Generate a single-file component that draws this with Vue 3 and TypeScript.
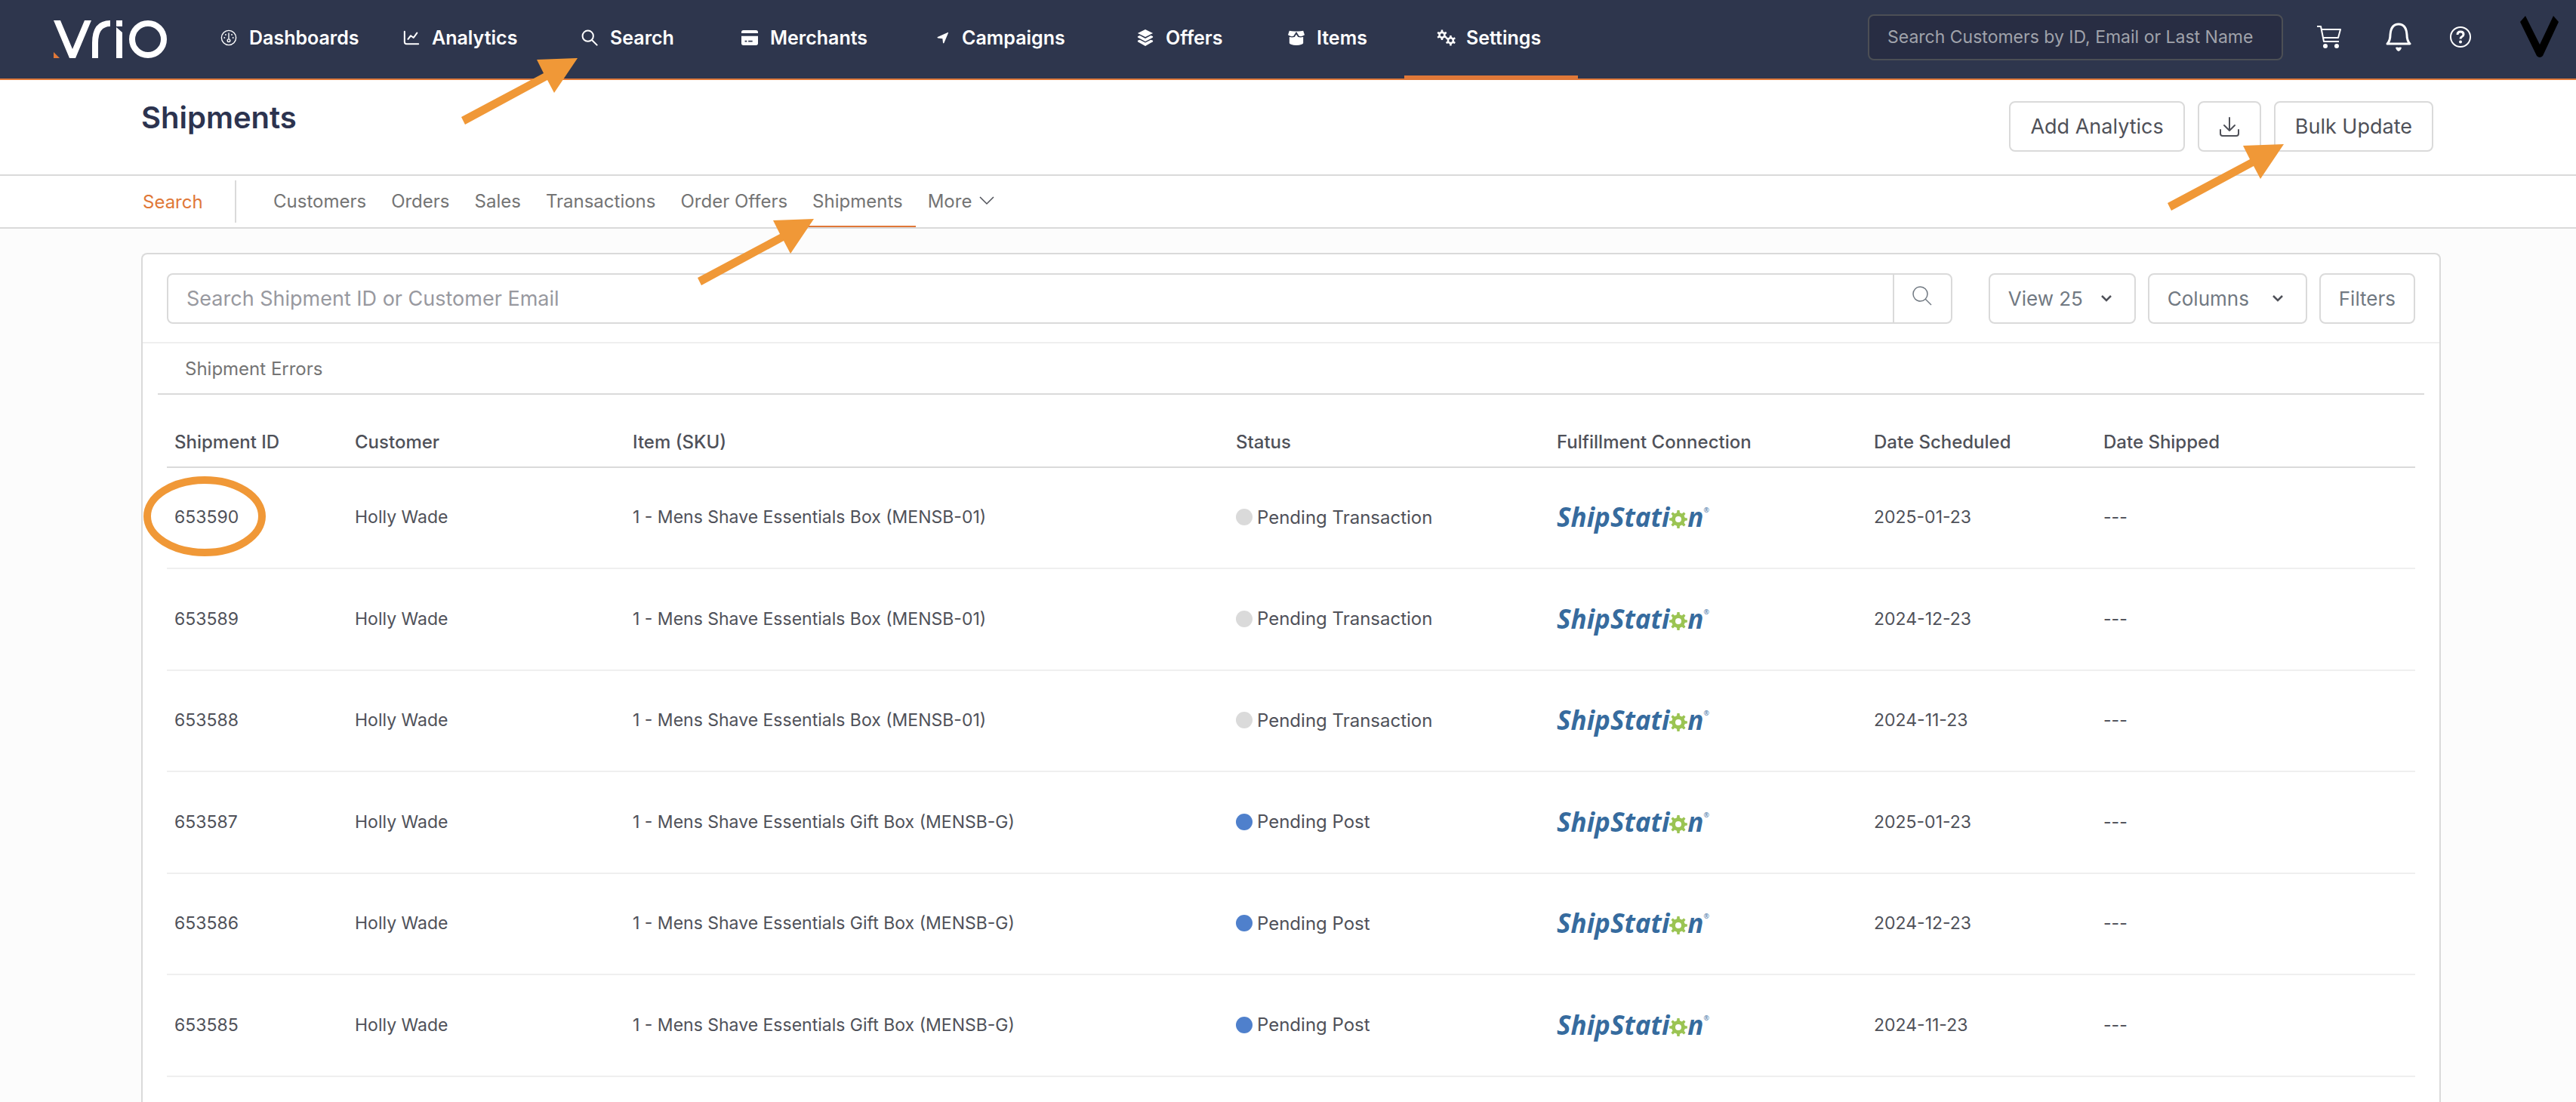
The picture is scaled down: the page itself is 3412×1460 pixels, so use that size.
<script setup lang="ts">
import { ref } from 'vue'

interface NavItem {
  label: string
  icon: string
  active?: boolean
  marked?: boolean
}

interface Tab {
  label: string
  active?: boolean
}

interface Shipment {
  id: string
  customer: string
  item: string
  status: 'Pending Transaction' | 'Pending Post'
  scheduled: string
  shipped: string
}

/** Outline of a cog wheel with a round hole in the middle (even-odd fill). */
function gear(cx: number, cy: number, teeth: number, outer: number, inner: number, hole: number): string {
  const step = (Math.PI * 2) / teeth
  const at = (r: number, a: number) => `${(cx + r * Math.sin(a)).toFixed(2)} ${(cy - r * Math.cos(a)).toFixed(2)}`
  const points: string[] = []
  for (let i = 0; i < teeth; i++) {
    const a = i * step
    points.push(at(inner, a - step * 0.28), at(outer, a - step * 0.17), at(outer, a + step * 0.17), at(inner, a + step * 0.28))
  }
  return `M${points.join('L')}Z M${cx - hole} ${cy}a${hole} ${hole} 0 1 0 ${hole * 2} 0a${hole} ${hole} 0 1 0 ${-hole * 2} 0Z`
}

const icons: Record<string, string> = {
  gauge:
    '<g fill="none" stroke="currentColor" stroke-width="1.5"><circle cx="12" cy="12" r="10.5"/><path d="M12 5v9"/><circle cx="12" cy="16" r="2"/></g><g fill="currentColor"><circle cx="7.6" cy="7.6" r="1"/><circle cx="16.4" cy="7.6" r="1"/><circle cx="5.8" cy="12" r="1"/><circle cx="18.2" cy="12" r="1"/></g>',
  chart:
    '<g fill="none" stroke="currentColor" stroke-width="2.2" stroke-linecap="round" stroke-linejoin="round"><path d="M2 3v15q0 3 3 3h17"/><path d="M7 14l4-5 4 3 5-7"/></g>',
  search:
    '<g fill="none" stroke="currentColor" stroke-width="2.2" stroke-linecap="round"><circle cx="9.5" cy="9.5" r="7.8"/><path d="M15.5 15.5l7 7"/></g>',
  creditcard:
    '<path fill="currentColor" fill-rule="evenodd" d="M3 1h18q3 0 3 3v1.500H0V4q0-3 3-3zM0 9.500h24V20q0 3-3 3H3q-3 0-3-3zM5 16v2h3v-2zM10 16v2h6v-2z"/>',
  arrow: '<path fill="currentColor" d="M20.500 2.500q1-.5.8 1L14 21q-1 2-2 0l-.8-7.500L3 12.500q-2-.8-.5-2z"/>',
  layers:
    '<path fill="currentColor" d="M12 0l11 5.500L12 11 1 5.500zM1 10l3-1.200 8 4.200 8-4.200 3 1.200v1.500L12 17.500 1 11.500zM1 16.200l3-1.200 8 4.200 8-4.200 3 1.200v1.500L12 24 1 17.700z"/>',
  box:
    '<path fill="currentColor" d="M2 2q5 1 10 .6Q17 3 22 2l2 6q-4 3-8 1.500L12 3.200 8 9.500Q4 11 0 8zM2 11q4 1 7.500 0L12 7 14.500 11q3.500 1 7.500 0v9q-1 2.500-10 3-9-.5-10-3z"/>',
  gears: `<path fill="currentColor" fill-rule="evenodd" d="${gear(6.5, 8, 6, 7.5, 5.2, 2.4)}${gear(19, 16, 6, 7.5, 5.2, 2.4)}"/>`,
}

const navItems: NavItem[] = [
  { label: 'Dashboards', icon: 'gauge' },
  { label: 'Analytics', icon: 'chart' },
  { label: 'Search', icon: 'search', marked: true },
  { label: 'Merchants', icon: 'creditcard' },
  { label: 'Campaigns', icon: 'arrow' },
  { label: 'Offers', icon: 'layers' },
  { label: 'Items', icon: 'box' },
  { label: 'Settings', icon: 'gears', active: true },
]

const tabs: Tab[] = [
  { label: 'Customers' },
  { label: 'Orders' },
  { label: 'Sales' },
  { label: 'Transactions' },
  { label: 'Order Offers' },
  { label: 'Shipments', active: true },
]

const columns = ['Shipment ID', 'Customer', 'Item (SKU)', 'Status', 'Fulfillment Connection', 'Date Scheduled', 'Date Shipped']

const box = '1 - Mens Shave Essentials Box (MENSB-01)'
const giftBox = '1 - Mens Shave Essentials Gift Box (MENSB-G)'

const shipments: Shipment[] = [
  { id: '653590', customer: 'Holly Wade', item: box, status: 'Pending Transaction', scheduled: '2025-01-23', shipped: '---' },
  { id: '653589', customer: 'Holly Wade', item: box, status: 'Pending Transaction', scheduled: '2024-12-23', shipped: '---' },
  { id: '653588', customer: 'Holly Wade', item: box, status: 'Pending Transaction', scheduled: '2024-11-23', shipped: '---' },
  { id: '653587', customer: 'Holly Wade', item: giftBox, status: 'Pending Post', scheduled: '2025-01-23', shipped: '---' },
  { id: '653586', customer: 'Holly Wade', item: giftBox, status: 'Pending Post', scheduled: '2024-12-23', shipped: '---' },
  { id: '653585', customer: 'Holly Wade', item: giftBox, status: 'Pending Post', scheduled: '2024-11-23', shipped: '---' },
]

const pointer = '154,0 100,2 109,20 0,78 5,88 114,29 123,46'
const cog = gear(12, 12, 8, 12, 9, 4)

const customerQuery = ref('')
const shipmentQuery = ref('')
const pageSize = ref('25')
</script>

<template>
  <div class="page">
    <header class="topbar">
      <a class="brand" href="#" aria-label="vrio">
        <svg width="150" height="50" viewBox="0 0 150 50" aria-hidden="true">
          <path fill="#fff" d="M0 0h9l16 38L41 0h9L29 50h-8zM83 0h8v8h-8zM83 9l8 7v34h-8z" />
          <path fill="none" stroke="#fff" stroke-width="8" d="M55 50V30Q55 4 75 4" />
          <circle cx="125" cy="25" r="21" fill="none" stroke="#fff" stroke-width="8" />
          <path fill="#e07838" d="M0 42l8 8H0z" />
        </svg>
      </a>
      <nav class="mainnav" aria-label="Main">
        <a v-for="item in navItems" :key="item.label" href="#" :class="{ active: item.active }">
          <svg class="navicon" :class="item.icon" viewBox="0 0 24 24" aria-hidden="true" v-html="icons[item.icon]"></svg>
          <span>{{ item.label }}</span>
          <svg v-if="item.marked" class="pointer at-search" viewBox="0 0 154 88" aria-hidden="true"><polygon :points="pointer" /></svg>
        </a>
      </nav>
      <div class="tools">
        <input v-model="customerQuery" type="text" class="global" aria-label="Search customers" placeholder="Search Customers by ID, Email or Last Name" />
        <button type="button" aria-label="Cart">
          <svg width="34" height="30" viewBox="0 0 34 30" fill="none" stroke="#fff" stroke-width="2" stroke-linejoin="round" aria-hidden="true">
            <path d="M1 1h5l4 20h20M7 5h25l-3 11H9" />
            <circle cx="12" cy="27" r="2" fill="#fff" /><circle cx="27" cy="27" r="2" fill="#fff" />
          </svg>
        </button>
        <button type="button" aria-label="Notifications">
          <svg width="34" height="38" viewBox="0 0 34 38" fill="none" stroke="#fff" stroke-width="3" stroke-linejoin="round" aria-hidden="true">
            <path d="M2 28q4-4 4-12Q7 2 17 2t11 14q0 8 4 12z" />
            <path d="M13 33q2-1 4 0 2-1 4 0-1 4-4 5-3-1-4-5z" fill="#fff" stroke="none" />
          </svg>
        </button>
        <button type="button" aria-label="Help">
          <svg width="30" height="30" viewBox="0 0 30 30" fill="none" stroke="#fff" stroke-width="2" aria-hidden="true">
            <circle cx="15" cy="15" r="13" />
            <path d="M11 12q0-4 4-4t4 3.500q0 2-2 3t-2 3" stroke-width="3" />
            <circle cx="15" cy="21.500" r="1" />
          </svg>
        </button>
        <button type="button" aria-label="Account">
          <svg width="51" height="56" viewBox="0 0 51 56" aria-hidden="true"><path d="M0 8l7-8 19 38L44 0l7 8-21 45q-4 4-8 0z" /></svg>
        </button>
      </div>
    </header>

    <section class="heading">
      <h1>Shipments</h1>
      <div class="actions">
        <button type="button" class="btn">Add Analytics</button>
        <button type="button" class="btn download" aria-label="Download">
          <svg width="28" height="28" viewBox="0 0 28 28" fill="none" stroke="#4f5159" stroke-width="2" stroke-linecap="round" stroke-linejoin="round" aria-hidden="true">
            <path d="M14 2v17M7 12l7 7 7-7" /><path d="M2 18v5q0 3 3 3h18q3 0 3-3v-5" />
          </svg>
        </button>
        <button type="button" class="btn">
          Bulk Update
          <svg class="pointer at-bulk" viewBox="0 0 154 88" aria-hidden="true"><polygon :points="pointer" /></svg>
        </button>
      </div>
    </section>

    <nav class="subnav" aria-label="Search sections">
      <a class="section" href="#">Search</a>
      <a v-for="tab in tabs" :key="tab.label" class="tab" :class="{ active: tab.active }" href="#">
        {{ tab.label }}
        <svg v-if="tab.active" class="pointer at-tab" viewBox="0 0 154 88" aria-hidden="true"><polygon :points="pointer" /></svg>
      </a>
      <button type="button" class="tab more" aria-haspopup="menu">
        More
        <svg width="20" height="12" viewBox="0 0 20 12" fill="none" stroke="#4f5159" stroke-width="1.500" aria-hidden="true"><path d="M1 1l9 9 9-9" /></svg>
      </button>
    </nav>

    <main class="panel">
      <div class="toolbar">
        <form class="finder" role="search" @submit.prevent>
          <input v-model="shipmentQuery" type="text" aria-label="Search shipments" placeholder="Search Shipment ID or Customer Email" />
          <button type="submit" aria-label="Search">
            <svg width="26" height="26" viewBox="0 0 26 26" fill="none" stroke="#717982" stroke-width="1.500" aria-hidden="true">
              <circle cx="10.500" cy="10.500" r="9.500" /><path d="M17 17l8 8" />
            </svg>
          </button>
        </form>
        <label class="picker">
          <select v-model="pageSize" class="btn muted" aria-label="Rows per page">
            <option value="25">View 25</option>
            <option value="50">View 50</option>
            <option value="100">View 100</option>
          </select>
          <svg width="14" height="9" viewBox="0 0 14 9" fill="none" stroke="#4f5159" stroke-width="2.500" aria-hidden="true"><path d="M1 1l6 6 6-6" /></svg>
        </label>
        <button type="button" class="btn muted columns" aria-haspopup="menu">
          Columns
          <svg width="14" height="9" viewBox="0 0 14 9" fill="none" stroke="#4f5159" stroke-width="2.500" aria-hidden="true"><path d="M1 1l6 6 6-6" /></svg>
        </button>
        <button type="button" class="btn muted">Filters</button>
      </div>

      <div class="views"><a href="#">Shipment Errors</a></div>

      <table>
        <colgroup>
          <col v-for="column in columns" :key="column" />
        </colgroup>
        <thead>
          <tr>
            <th v-for="column in columns" :key="column" scope="col">{{ column }}</th>
          </tr>
        </thead>
        <tbody>
          <tr v-for="(row, index) in shipments" :key="row.id">
            <td>
              <span class="id">{{ row.id }}<svg v-if="index === 0" class="ring" viewBox="0 0 162 106" aria-hidden="true"><ellipse cx="81" cy="53" rx="76" ry="48" /></svg></span>
            </td>
            <td>{{ row.customer }}</td>
            <td>{{ row.item }}</td>
            <td>
              <span class="status"><i class="dot" :class="{ post: row.status === 'Pending Post' }"></i>{{ row.status }}</span>
            </td>
            <td>
              <span class="shipstation">ShipStati<svg viewBox="0 0 24 24" role="img" aria-label="o"><path :d="cog" fill="#9bc453" fill-rule="evenodd" /></svg>n<sup>®</sup></span>
            </td>
            <td>{{ row.scheduled }}</td>
            <td>{{ row.shipped }}</td>
          </tr>
        </tbody>
      </table>
    </main>
  </div>
</template>

<style>
body {
  margin: 0;
  background: #fcfcfc;
}
</style>

<style scoped>
.page {
  display: flex;
  flex-direction: column;
  min-height: 100vh;
  font-family: Inter, "Open Sans", sans-serif;
  font-size: 24px;
  color: #4f5159;
}
.page *,
.page *::before {
  box-sizing: border-box;
}
a {
  color: inherit;
  text-decoration: none;
}
button,
input,
select {
  margin: 0;
  padding: 0;
  border: 0;
  background: none;
  font: inherit;
  color: inherit;
}
svg {
  display: block;
  flex: none;
}

.topbar {
  display: flex;
  align-items: center;
  height: 106px;
  padding: 0 23px 0 71px;
  background: #2e364d;
  border-bottom: 2px solid #e07838;
}
.mainnav {
  display: grid;
  grid-template-columns: 242px 236px 212px 258px 266px 200px 198px 186px;
  height: 104px;
  margin-left: 71px;
  color: #fff;
  font-size: 25px;
  font-weight: 600;
}
.mainnav a {
  position: relative;
  display: flex;
  align-items: center;
  gap: 16px;
  padding-bottom: 4px;
}
.navicon {
  width: 22px;
  height: 22px;
}
.navicon.arrow {
  width: 18px;
}
.navicon.gears {
  overflow: visible;
}
.mainnav .active::before {
  content: "";
  position: absolute;
  left: -44px;
  right: 0;
  bottom: -2px;
  height: 6px;
  background: #e07838;
}
.tools {
  display: flex;
  align-items: center;
  margin-left: auto;
  padding-bottom: 6px;
}
.tools button {
  margin-left: 50px;
}
.tools .global + button {
  margin-left: 44px;
}
.tools button:nth-of-type(2) {
  margin-left: 58px;
}
.tools button:last-child {
  margin-left: 64px;
}
.global {
  width: 550px;
  height: 61px;
  padding: 0 24px;
  border: 2px solid #4c4f55;
  border-radius: 8px;
  background: #282d43;
  color: #fff;
  font-size: 23px;
}
.global::placeholder {
  color: #a0a3ab;
  opacity: 1;
}

.heading {
  display: flex;
  justify-content: space-between;
  align-items: flex-start;
  height: 127px;
  padding: 28px 189px 0 187px;
  background: #fff;
  border-bottom: 2px solid #dadada;
}
h1 {
  margin: 0;
  color: #2c334f;
  font-size: 40px;
  line-height: 44px;
  font-weight: 600;
}
.actions {
  display: flex;
  gap: 17px;
}
.btn {
  position: relative;
  display: flex;
  align-items: center;
  height: 67px;
  padding: 0 26px;
  border: 2px solid #dadada;
  border-radius: 8px;
  background: #fff;
  font-size: 27px;
  white-space: nowrap;
}
.btn.muted {
  padding: 0 24px;
  color: #717982;
  font-size: 26px;
}

.subnav {
  display: flex;
  align-items: stretch;
  height: 70px;
  padding-left: 189px;
  background: #fff;
  border-bottom: 2px solid #dadada;
  color: #747474;
}
.section {
  display: flex;
  align-items: center;
  width: 124px;
  margin: 6px 33px 6px 0;
  border-right: 2px solid #dadada;
  color: #e07838;
}
.tab {
  position: relative;
  display: flex;
  align-items: center;
  gap: 10px;
  padding: 0 17px 0 16px;
  border-bottom: 2px solid transparent;
}
.tab.active {
  border-bottom-color: #e07838;
}

.panel {
  flex: 1;
  margin: 32px 179px 0 187px;
  border: 2px solid #dadada;
  border-bottom: 0;
  border-radius: 8px 8px 0 0;
  background: #fff;
}
.toolbar {
  display: flex;
  align-items: center;
  gap: 16px;
  height: 118px;
  padding: 0 32px;
  border-bottom: 2px solid #efefef;
}
.finder {
  display: flex;
  flex: 1;
  height: 67px;
  margin-right: 32px;
  border: 2px solid #dadada;
  border-radius: 8px;
}
.finder input {
  flex: 1;
  padding: 0 24px;
  font-size: 27px;
}
.finder input::placeholder {
  color: #98999f;
  opacity: 1;
}
.finder button {
  display: flex;
  align-items: center;
  justify-content: center;
  width: 77px;
  padding-bottom: 6px;
  border-left: 2px solid #dadada;
}
.picker {
  position: relative;
}
.picker select {
  width: 195px;
  appearance: none;
}
.picker svg {
  position: absolute;
  top: 29px;
  right: 32px;
  pointer-events: none;
}
.btn.columns {
  justify-content: space-between;
  width: 211px;
  padding-right: 30px;
}
.views {
  display: flex;
  align-items: center;
  height: 68px;
  margin: 0 20px;
  padding: 0 36px;
  border-bottom: 2px solid #dadada;
  color: #747474;
}

table {
  width: calc(100% - 64px);
  margin: 0 32px;
  border-collapse: collapse;
  table-layout: fixed;
}
col:nth-child(1) { width: 239px; }
col:nth-child(2) { width: 368px; }
col:nth-child(3) { width: 799px; }
col:nth-child(4) { width: 425px; }
col:nth-child(5) { width: 420px; }
col:nth-child(6) { width: 304px; }
th,
td {
  padding: 0 10px;
  text-align: left;
  white-space: nowrap;
}
th {
  height: 96px;
  padding-top: 30px;
  border-bottom: 2px solid #dadada;
  font-weight: 500;
}
td {
  height: 134px;
  padding-bottom: 2px;
  border-bottom: 2px solid #efefef;
  font-size: 23px;
}
tr:nth-child(even) td {
  height: 135px;
}
.id {
  position: relative;
}
.status {
  display: flex;
  align-items: center;
  gap: 6px;
  font-size: 24px;
}
.dot {
  width: 22px;
  height: 22px;
  border-radius: 50%;
  background: #dadada;
}
.dot.post {
  background: #4f80cc;
}
.shipstation {
  display: flex;
  align-items: center;
  color: #366b9e;
  font-family: "Open Sans", "Noto Sans", sans-serif;
  font-size: 35px;
  line-height: 40px;
  font-style: italic;
  font-weight: 700;
}
.shipstation svg {
  width: 24px;
  height: 24px;
  margin-top: 6px;
}
.shipstation sup {
  align-self: flex-start;
  font-size: 9px;
  line-height: 22px;
  font-style: normal;
  font-weight: 400;
}

.pointer {
  position: absolute;
  z-index: 2;
  width: 154px;
  height: 88px;
  fill: #f09837;
  pointer-events: none;
}
.at-search {
  top: 77px;
  left: -159px;
}
.at-tab {
  top: 57px;
  left: -136px;
}
.at-bulk {
  top: 55px;
  left: -143px;
}
.ring {
  position: absolute;
  top: -40px;
  left: -41px;
  width: 162px;
  height: 106px;
  fill: none;
  stroke: #f09837;
  stroke-width: 10px;
  pointer-events: none;
}
</style>
